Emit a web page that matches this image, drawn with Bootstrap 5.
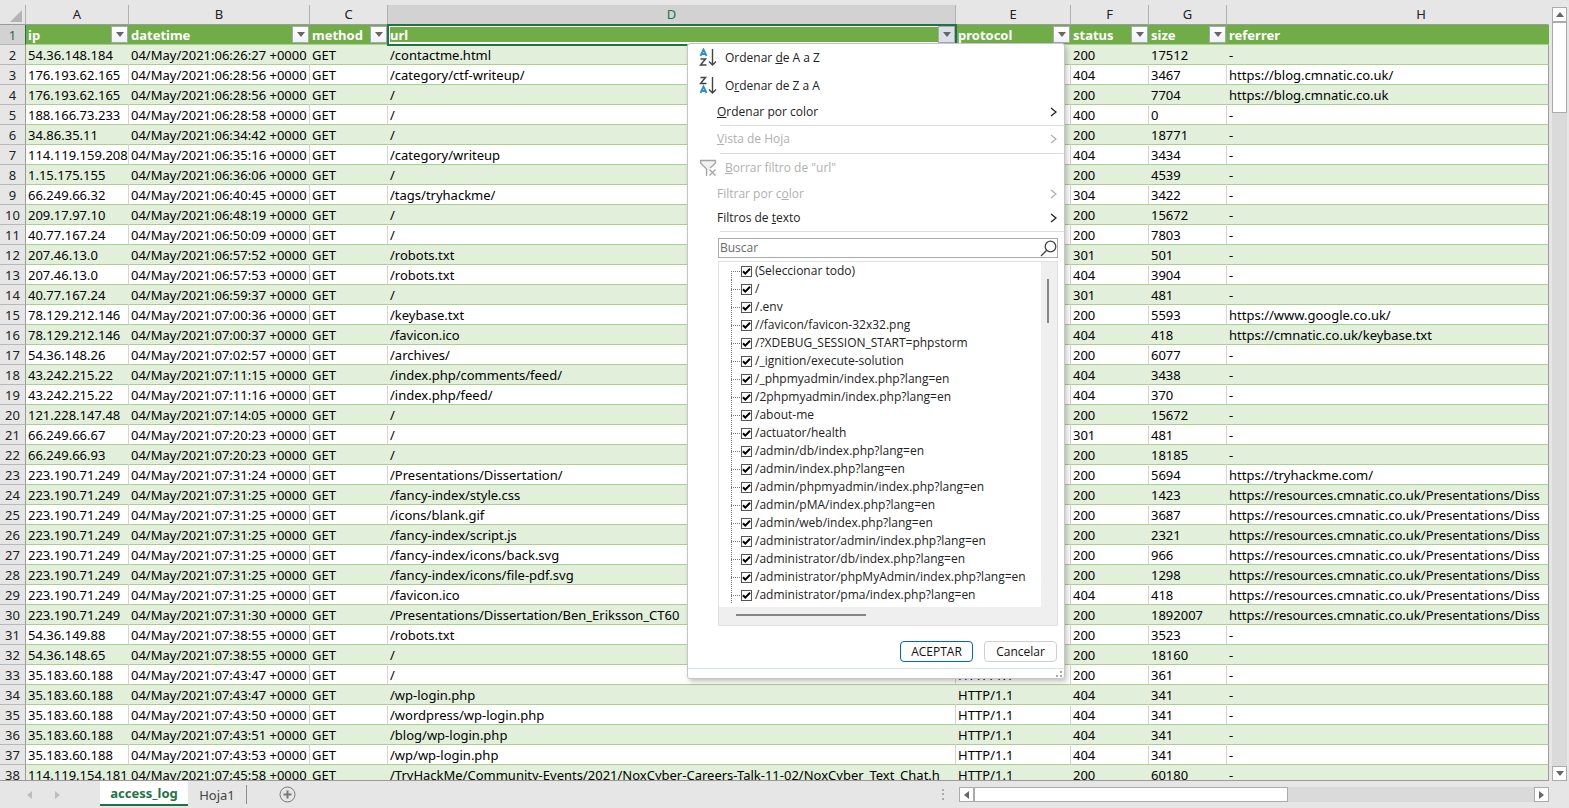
<!DOCTYPE html>
<html lang="es">
<head>
<meta charset="utf-8">
<meta name="viewport" content="width=device-width, initial-scale=1">
<title>access_log</title>
<link href="https://cdn.jsdelivr.net/npm/bootstrap@5.3.0/dist/css/bootstrap.min.css" rel="stylesheet">
<style>
  body { font: 13px/18px "Noto Sans", "Open Sans", sans-serif; color: #000; background: #e6e6e6; }
  button { padding: 0; font: inherit; }

  /* sheet */
  .sheet-area { padding-top: 5px; min-height: 0; }
  .grid-pane { min-width: 0; border-bottom: 1px solid #9b9b9b; }
  .sheet { table-layout: fixed; width: 100%; border-collapse: separate; border-spacing: 0; }
  .sheet th, .sheet td { height: 20px; padding: 0 2px; white-space: nowrap; }
  .sheet td { overflow: hidden; border-right: 1px solid #d4d4d4; border-bottom: 1px solid #a9d08e; background: #fff; line-height: 17px; padding-top: 2px; }
  .sheet tbody tr:nth-child(odd) td { background: #e2efda; border-right-color: #e2efda; }
  .sheet td:last-child, .sheet tbody tr:nth-child(odd) td:last-child { border-right-color: #9b9b9b; }
  .sheet th.letter { text-align: center; font-weight: 400; border-right: 1px solid #b1b1b1; border-bottom: 1px solid #9b9b9b; line-height: 19px; color: #222; }
  .sheet th.letter:last-child { border-right-color: #e6e6e6; padding-left: 69px; }
  .sheet th.rownum { text-align: center; font-weight: 400; padding: 2px 0 0; border-right: 1px solid #9b9b9b; border-bottom: 1px solid #b8b8b8; line-height: 17px; color: #222; background: #e6e6e6; }
  .sheet th.active, .sheet th.rownum.active { background: #d2d2d2; color: #217346; }
  .sheet th.rownum.active { border-right-color: #217346; }
  .sheet th.corner { padding: 0 3px 2px 0; text-align: right; vertical-align: bottom; line-height: 0; border-right: 1px solid #b1b1b1; border-bottom: 1px solid #9b9b9b; }
  .sheet th.field { background: #70ad47; color: #fff; padding: 0; border-bottom: 1px solid #a9d08e; }
  .sheet th.field .title { padding: 2px 0 0 2px; line-height: 17px; }
  .sheet th.selected { outline: 2px solid #217346; outline-offset: -1px; box-shadow: inset 0 0 0 2px #fff; position: relative; z-index: 5; }
  .filter-btn { width: 17px; height: 17px; border: 1px solid #a6a9b5; background: linear-gradient(#fff, #f0f1f5); margin-right: 1px; }
  .filter-btn.open { background: #dcdfe5; }
  .tri { width: 0; height: 0; border: 4px solid transparent; }
  .tri-down { border-top: 5px solid #666; border-bottom: 0; }
  .tri-up { border-bottom: 5px solid #666; border-top: 0; }
  .tri-left { border-right: 5px solid #666; border-left: 0; }
  .tri-right { border-left: 5px solid #666; border-right: 0; }

  /* scroll bars */
  .vbar { width: 20px; padding: 2px 2px 0 3px; }
  .arrow-btn { width: 15px; height: 15px; background: #fff; border: 1px solid #ababab; flex: none; }
  .track { background: #dadada; min-height: 15px; }
  .v-thumb { height: 91px; background: #fff; border: 1px solid #ababab; }
  .h-thumb { width: 56%; background: #fff; border: 1px solid #ababab; }

  /* sheet tabs */
  .tabs-bar { height: 27px; }
  .tab-arrows { width: 100px; padding-left: 27px; gap: 23px; }
  .tab-arrows button { width: 5px; border: 0; background: none; }
  .tab-arrows .tri-left { border-right-color: #bdbdbd; }
  .tab-arrows .tri-right { border-left-color: #bdbdbd; }
  .sheet-tab { border: 0; background: none; height: 25px; color: #444; }
  .sheet-tab.current { width: 88px; background: #fff; color: #217346; font-weight: 700; border-bottom: 2px solid #217346; }
  .sheet-tab.other { width: 59px; height: 19px; border-right: 1px solid #8f8f8f; }
  .add-btn { border: 0; background: none; line-height: 0; margin-left: 32px; }
  .split-dots { padding-right: 15px; }
  .hscroll { width: 590px; margin-right: 20px; }

  /* filter menu */
  .filter-menu { position: absolute; left: 299px; top: 18px; width: 378px; background: #fff; border: 1px solid #c6c6c6; border-radius: 3px; box-shadow: 2px 3px 5px rgba(0,0,0,.22); color: #222; font: 400 12px/16px "Open Sans", "Noto Sans", sans-serif; }
  .menu-row { width: 100%; height: 24px; border: 0; background: none; color: inherit; padding: 0 7px 0 29px; }
  .menu-row.tall { height: 28px; padding-left: 11px; }
  .menu-row.mid { height: 26px; }
  .menu-row.tall svg { margin-right: 7px; }
  .menu-row:disabled { color: #b0b0b0; }
  .rule { height: 1px; background: #dcdcdc; margin: 1px 0 0 32px; }
  .search-box { margin: 6px 6px 0 30px; height: 20px; border: 1px solid #ababab; }
  .search-box input { border: 0; outline: 0; padding: 0 1px; min-width: 0; }
  .search-box input::placeholder { color: #6a6a6a; opacity: 1; }
  .value-box { margin: 3px 6px 0 30px; height: 365px; border: 1px solid #e0e0e0; background: #efefef; }
  .value-list { height: 345px; background: #fff; margin: 0 16px 0 0; padding: 0 0 0 12px; overflow: hidden; }
  .value-list li { height: 18px; background: repeating-linear-gradient(#777 0 1px, transparent 1px 2px) 0 0 / 1px 100% no-repeat; }
  .value-list li:first-child { background-size: 1px 50%; background-position: 0 100%; }
  .value-list li::before { content: ""; width: 10px; height: 1px; background: repeating-linear-gradient(90deg, #777 0 1px, transparent 1px 2px); }
  .value-list input { appearance: none; width: 11px; height: 11px; margin: 0 3px 0 0; border: 1px solid #555; background: #fff url("data:image/svg+xml,%3Csvg xmlns='http://www.w3.org/2000/svg' viewBox='0 0 9 9'%3E%3Cpath d='M1 4.2 3.3 6.6 8 1.8' fill='none' stroke='%23000' stroke-width='2'/%3E%3C/svg%3E"); }
  .value-scroll { position: absolute; right: 15px; top: 235px; width: 2px; height: 44px; background: #868686; }
  .value-hscroll { width: 130px; height: 2px; background: #868686; margin: 7px 0 0 17px; }
  .actions { padding: 15px 7px 6px 0; gap: 11px; }
  .actions button { width: 73px; height: 21px; border: 1px solid #d0d0d0; border-radius: 4px; background: #fdfdfd; color: #111; }
  .actions button.ok { border-color: #0067c0; }
  .grip { height: 10px; border-top: 1px solid #d9e3ec; line-height: 0; padding: 2px 2px 0 0; }
</style>
</head>
<body>
<main class="vh-100 d-flex flex-column overflow-hidden">
  <div class="sheet-area d-flex flex-grow-1">
    <div class="grid-pane flex-grow-1 overflow-hidden">
      <table class="sheet">
        <colgroup>
          <col style="width:26px"><col style="width:103px"><col style="width:181px"><col style="width:78px"><col style="width:568px"><col style="width:115px"><col style="width:78px"><col style="width:78px"><col>
        </colgroup>
        <thead>
          <tr>
            <th class="corner"><svg width="12" height="12" aria-hidden="true"><path d="M12 0V12H0Z" fill="#b4b4b4"/></svg></th>
            <th class="letter">A</th><th class="letter">B</th><th class="letter">C</th><th class="letter active">D</th><th class="letter">E</th><th class="letter">F</th><th class="letter">G</th><th class="letter">H</th>
          </tr>
          <tr id="fields">
            <th class="rownum active">1</th>
            <th class="field">ip</th><th class="field">datetime</th><th class="field">method</th>
            <th class="field selected">
              url
            </th>
            <th class="field">protocol</th><th class="field">status</th><th class="field">size</th><th class="field">referrer</th>
          </tr>
        </thead>
        <tbody id="log"></tbody>
      </table>
    </div>
    <div class="vbar d-flex flex-column flex-shrink-0">
      <button class="arrow-btn d-flex align-items-center justify-content-center" aria-label="Subir"><span class="tri tri-up"></span></button>
      <div class="track flex-grow-1"><div class="v-thumb"></div></div>
      <button class="arrow-btn d-flex align-items-center justify-content-center" aria-label="Bajar"><span class="tri tri-down"></span></button>
    </div>
  </div>

  <footer class="tabs-bar d-flex flex-shrink-0">
    <div class="tab-arrows d-flex align-items-center">
      <button aria-label="Hoja anterior"><span class="tri tri-left d-block"></span></button>
      <button aria-label="Hoja siguiente"><span class="tri tri-right d-block"></span></button>
    </div>
    <button class="sheet-tab current">access_log</button>
    <button class="sheet-tab other mt-1">Hoja1</button>
    <button class="add-btn" aria-label="Hoja nueva"><svg width="17" height="17" fill="none" stroke="#777"><circle cx="8.500" cy="8.500" r="7.500"/><path d="M8.500 4.500v8M4.500 8.500h8" stroke-width="2"/></svg></button>
    <div class="split-dots flex-grow-1 d-flex justify-content-end align-items-center">
      <svg width="2" height="11" fill="#ababab"><path d="M0 0h2v2H0zM0 4h2v2H0zM0 9h2v2H0z"/></svg>
    </div>
    <div class="hscroll d-flex align-items-center flex-shrink-0">
      <button class="arrow-btn d-flex align-items-center justify-content-center" aria-label="Izquierda"><span class="tri tri-left"></span></button>
      <div class="track flex-grow-1 d-flex"><div class="h-thumb"></div></div>
      <button class="arrow-btn d-flex align-items-center justify-content-center" aria-label="Derecha"><span class="tri tri-right"></span></button>
    </div>
  </footer>
</main>

<template id="menu">
  <div class="filter-menu text-start">
    <button class="menu-row tall d-flex align-items-center"><svg width="19" height="20" fill="none" stroke-width="1.500"><path d="M1.500 8 4.500 1.500 7.500 8M2.500 6h4" stroke="#2b8fd0" stroke-width="1.800"/><path d="M1.500 11h5L1.500 17h6" stroke="#444"/><path d="M13.500 1v16M10 13.500 13.500 17l3.500-3.500" stroke="#444" stroke-width="1.400"/></svg><span>Ordenar <u>d</u>e A a Z</span></button>
    <button class="menu-row tall d-flex align-items-center"><svg width="19" height="20" fill="none" stroke-width="1.500"><path d="M1.500 1.500h5L1.500 7.500h6" stroke="#444"/><path d="M1.500 17 4.500 10.500 7.500 17M2.500 15h4" stroke="#2b8fd0" stroke-width="1.800"/><path d="M13.500 1v16M10 13.500 13.500 17l3.500-3.500" stroke="#444" stroke-width="1.400"/></svg><span>O<u>r</u>denar de Z a A</span></button>
    <button class="menu-row sub"><span><u>O</u>rdenar por color</span></button>
    <div class="rule"></div>
    <button class="menu-row mid sub" disabled><span><u>V</u>ista de Hoja</span></button>
    <div class="rule"></div>
    <button class="menu-row tall d-flex align-items-center" disabled><svg width="19" height="19" fill="none" stroke="#a3a3a3" stroke-width="1.300"><path d="M7.500 17V10L1.500 4V1.500h15V4L11 9" fill="#f1f1f1"/><path d="m10.500 10.500 6 6m0-6-6 6"/></svg><span><u>B</u>orrar filtro de "url"</span></button>
    <button class="menu-row sub" disabled><span>Filtrar por c<u>o</u>lor</span></button>
    <button class="menu-row sub"><span>Filtros de <u>t</u>exto</span></button>
    <div class="rule"></div>
    <div class="search-box d-flex align-items-center">
      <input class="flex-grow-1" type="text" placeholder="Buscar" aria-label="Buscar">
      <svg width="17" height="17" fill="none" stroke="#444" stroke-width="1.300"><circle cx="10.500" cy="6.500" r="5.300"/><path d="M6.700 10.300 1 16"/></svg>
    </div>
    <div class="value-box">
      <ul class="value-list list-unstyled" id="values"></ul>
      <div class="value-hscroll"></div>
    </div>
    <div class="value-scroll"></div>
    <div class="actions d-flex justify-content-end"><button class="ok">ACEPTAR</button><button>Cancelar</button></div>
    <div class="grip text-end"><svg width="7" height="7" fill="#a9a9a9"><path d="M5 0h2v2H5zM5 4h2v2H5zM1 4h2v2H1z"/></svg></div>
  </div>
</template>

<script src="https://cdn.jsdelivr.net/npm/bootstrap@5.3.0/dist/js/bootstrap.bundle.min.js"></script>
<script>
  // ip | time | url | status | size | referrer
  const diss = 'https://resources.cmnatic.co.uk/Presentations/Diss';
  const log = `54.36.148.184|06:26:27|/contactme.html|200|17512|-
176.193.62.165|06:28:56|/category/ctf-writeup/|404|3467|https://blog.cmnatic.co.uk/
176.193.62.165|06:28:56|/|200|7704|https://blog.cmnatic.co.uk
188.166.73.233|06:28:58|/|400|0|-
34.86.35.11|06:34:42|/|200|18771|-
114.119.159.208|06:35:16|/category/writeup|404|3434|-
1.15.175.155|06:36:06|/|200|4539|-
66.249.66.32|06:40:45|/tags/tryhackme/|304|3422|-
209.17.97.10|06:48:19|/|200|15672|-
40.77.167.24|06:50:09|/|200|7803|-
207.46.13.0|06:57:52|/robots.txt|301|501|-
207.46.13.0|06:57:53|/robots.txt|404|3904|-
40.77.167.24|06:59:37|/|301|481|-
78.129.212.146|07:00:36|/keybase.txt|200|5593|https://www.google.co.uk/
78.129.212.146|07:00:37|/favicon.ico|404|418|https://cmnatic.co.uk/keybase.txt
54.36.148.26|07:02:57|/archives/|200|6077|-
43.242.215.22|07:11:15|/index.php/comments/feed/|404|3438|-
43.242.215.22|07:11:16|/index.php/feed/|404|370|-
121.228.147.48|07:14:05|/|200|15672|-
66.249.66.67|07:20:23|/|301|481|-
66.249.66.93|07:20:23|/|200|18185|-
223.190.71.249|07:31:24|/Presentations/Dissertation/|200|5694|https://tryhackme.com/
223.190.71.249|07:31:25|/fancy-index/style.css|200|1423|${diss}
223.190.71.249|07:31:25|/icons/blank.gif|200|3687|${diss}
223.190.71.249|07:31:25|/fancy-index/script.js|200|2321|${diss}
223.190.71.249|07:31:25|/fancy-index/icons/back.svg|200|966|${diss}
223.190.71.249|07:31:25|/fancy-index/icons/file-pdf.svg|200|1298|${diss}
223.190.71.249|07:31:25|/favicon.ico|404|418|${diss}
223.190.71.249|07:31:30|/Presentations/Dissertation/Ben_Eriksson_CT60|200|1892007|${diss}
54.36.149.88|07:38:55|/robots.txt|200|3523|-
54.36.148.65|07:38:55|/|200|18160|-
35.183.60.188|07:43:47|/|200|361|-
35.183.60.188|07:43:47|/wp-login.php|404|341|-
35.183.60.188|07:43:50|/wordpress/wp-login.php|404|341|-
35.183.60.188|07:43:51|/blog/wp-login.php|404|341|-
35.183.60.188|07:43:53|/wp/wp-login.php|404|341|-
114.119.154.181|07:45:58|/TryHackMe/Community-Events/2021/NoxCyber-Careers-Talk-11-02/NoxCyber_Text_Chat.h|200|60180|-`;
  document.getElementById('log').innerHTML = log.split('\n').map((line, i) => {
    const [ip, time, url, status, size, ref] = line.split('|');
    const cells = [ip, `04/May/2021:${time} +0000`, 'GET', url, 'HTTP/1.1', status, size, ref];
    return `<tr><th class="rownum">${i + 2}</th>${cells.map(c => `<td>${c}</td>`).join('')}</tr>`;
  }).join('');

  // header cells get their drop-down button; the url column has its menu open
  document.querySelectorAll('#fields .field').forEach(th => {
    const name = th.textContent.trim(), open = th.classList.contains('selected');
    const btn = name === 'referrer' ? '' : `<button class="filter-btn d-flex align-items-center justify-content-center ${open ? 'open' : ''}" aria-label="Filtrar ${name}"><span class="tri tri-down"></span></button>`;
    th.innerHTML = `<div class="d-flex align-items-center justify-content-between"><span class="title">${name}</span>${btn}</div>`;
    if (open) th.append(document.getElementById('menu').content.cloneNode(true));
  });
  document.querySelectorAll('.menu-row.sub').forEach(row => {
    row.classList.add('d-flex', 'align-items-center', 'justify-content-between');
    row.insertAdjacentHTML('beforeend', '<svg width="7" height="10" fill="none" stroke="currentColor" stroke-width="1.300"><path d="m1 1 5 4-5 4"/></svg>');
  });

  const values = ['(Seleccionar todo)', '/', '/.env', '//favicon/favicon-32x32.png', '/?XDEBUG_SESSION_START=phpstorm', '/_ignition/execute-solution', '/_phpmyadmin/index.php?lang=en', '/2phpmyadmin/index.php?lang=en', '/about-me', '/actuator/health', '/admin/db/index.php?lang=en', '/admin/index.php?lang=en', '/admin/phpmyadmin/index.php?lang=en', '/admin/pMA/index.php?lang=en', '/admin/web/index.php?lang=en', '/administrator/admin/index.php?lang=en', '/administrator/db/index.php?lang=en', '/administrator/phpMyAdmin/index.php?lang=en', '/administrator/pma/index.php?lang=en'];
  document.getElementById('values').innerHTML = values.map((v, i) =>
    `<li class="d-flex align-items-center"><input type="checkbox" id="v${i}" checked><label for="v${i}">${v}</label></li>`).join('');
</script>
</body>
</html>
